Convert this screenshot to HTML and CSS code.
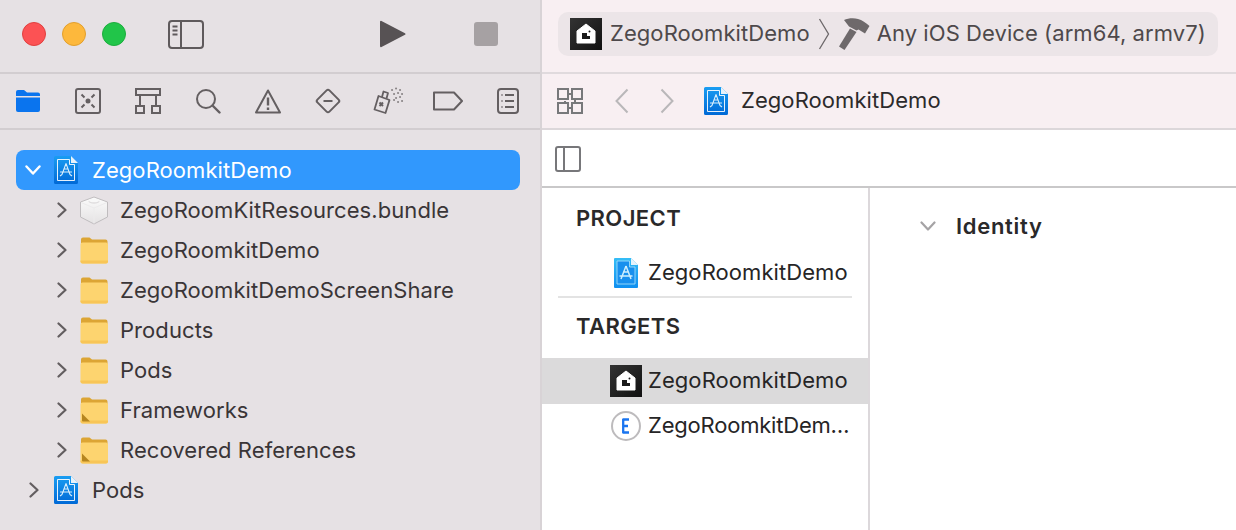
FILE: index.html
```html
<!DOCTYPE html>
<html lang="en">
<head>
<meta charset="utf-8">
<title>ZegoRoomkitDemo</title>
<link rel="stylesheet" href="styles.css">
</head>
<body>
<svg class="defs" width="0" height="0" aria-hidden="true">
  <defs>
    <linearGradient id="blue" x1="0" y1="0" x2="0" y2="1"><stop offset="0" stop-color="#1a9df2"/><stop offset="1" stop-color="#0069d6"/></linearGradient>
    <linearGradient id="lightblue" x1="0" y1="0" x2="0" y2="1"><stop offset="0" stop-color="#35bdf6"/><stop offset="1" stop-color="#0f8ff0"/></linearGradient>
    <linearGradient id="dark" x1="0" y1="0" x2="1" y2="1"><stop offset="0" stop-color="#333"/><stop offset="1" stop-color="#111"/></linearGradient>
    <linearGradient id="brick" x1="0" y1="0" x2="0" y2="1"><stop offset="0" stop-color="#fbfbfb"/><stop offset="1" stop-color="#e4e2e3"/></linearGradient>
    <symbol id="doc" viewBox="0 0 24 28">
      <path d="M1.500 0H17l7 7v19.500a1.500 1.500 0 0 1-1.500 1.500h-21A1.500 1.500 0 0 1 0 26.500V1.500A1.500 1.500 0 0 1 1.500 0z" fill="url(#blue)"/>
      <path d="M17 0l7 7h-7z" fill="#e8f2fa"/>
      <path d="M3.500 3.500H15.500V8.500H20.500V24.500H3.500z" fill="none" stroke="#fff" stroke-width=".9"/>
      <path d="M12 7.500L8 18.500M12 7.500L16 18.500M9.500 13h5M6 16h12M6 20l2-1.500M18 20l-2-1.500" fill="none" stroke="#d8eefc" stroke-width="1.100"/>
    </symbol>
    <symbol id="app" viewBox="0 0 32 32">
      <rect width="32" height="32" fill="url(#dark)"/>
      <path d="M16 6L25 13V25H7V13z" fill="#fff" stroke="#fff" stroke-linejoin="round"/>
      <path d="M12 15h5v3h3v3h-8z" fill="#1a1a1a"/>
      <circle cx="19.500" cy="13.500" r="1" fill="#1a1a1a"/>
    </symbol>
    <symbol id="folder" viewBox="0 0 28 28">
      <path d="M1 6.500V3.500A2 2 0 0 1 3 1.500h6.500l2.500 2H25.500A2 2 0 0 1 27.500 5.500V8H1z" fill="#dca534"/>
      <path d="M.5 8.500A2 2 0 0 1 2.500 6.500H26a2 2 0 0 1 2 2V25.500a2 2 0 0 1-2 2H2.500a2 2 0 0 1-2-2z" fill="#fdd46f"/>
      <path d="M.5 24.500H28v1a2 2 0 0 1-2 2H2.500a2 2 0 0 1-2-2z" fill="#f8c557"/>
    </symbol>
    <symbol id="folder-ref" viewBox="0 0 28 28">
      <use href="#folder" width="28" height="28"/>
      <path d="M2 17.500L10 25.500H3a1 1 0 0 1-1-1z" fill="#b5851f"/>
    </symbol>
    <symbol id="chev" viewBox="0 0 10 16">
      <path d="M1.500 1.500L8.500 8L1.500 14.500" fill="none" stroke="currentColor" stroke-width="2.200" stroke-linecap="round" stroke-linejoin="round"/>
    </symbol>
  </defs>
</svg>

<div class="window">
  <aside class="left">
    <header class="left-toolbar">
      <div class="lights">
        <span class="light red"></span><span class="light yellow"></span><span class="light green"></span>
      </div>
      <svg class="ico-sidebar" width="36" height="29" viewBox="0 0 36 29"><rect x="1" y="1" width="34" height="27" rx="3" fill="none" stroke="#5f5a5c" stroke-width="2"/><path d="M13 1v27" stroke="#5f5a5c" stroke-width="2"/><path d="M4.500 6.500h5M4.500 10.500h5M4.500 14.500h5" stroke="#5f5a5c" stroke-width="2"/></svg>
      <svg class="ico-play" width="26" height="28" viewBox="0 0 26 28"><path d="M1.500 1L25 13.200a1 1 0 0 1 0 1.600L1.500 27a1 1 0 0 1-1.500-1V2a1 1 0 0 1 1.500-1z" fill="#575254"/></svg>
      <span class="stop"></span>
    </header>
    <nav class="tabs">
      <span class="tab"><svg width="26" height="24" viewBox="0 0 26 24"><path d="M1 5V3a2 2 0 0 1 2-2h6l3 2.500h11a2 2 0 0 1 2 2V7H1z" fill="#0a74ee"/><path d="M1 8.500h24V21a2 2 0 0 1-2 2H3a2 2 0 0 1-2-2z" fill="#0a74ee"/></svg></span>
      <span class="tab"><svg width="26" height="26" viewBox="0 0 26 26" fill="none" stroke="#645f61" stroke-width="2"><rect x="1" y="1" width="24" height="24" rx="2"/><circle cx="13" cy="13" r="2.500" fill="#645f61" stroke="none"/><path d="M6.500 6.500l3 3M19.500 6.500l-3 3M6.500 19.500l3-3M19.500 19.500l-3-3"/></svg></span>
      <span class="tab"><svg width="26" height="26" viewBox="0 0 26 26" fill="none" stroke="#645f61" stroke-width="2"><rect x="1" y="1" width="24" height="6"/><path d="M5 7v11M21 7v11"/><rect x="1" y="18" width="8" height="7"/><rect x="17" y="18" width="8" height="7"/></svg></span>
      <span class="tab"><svg width="26" height="26" viewBox="0 0 26 26" fill="none" stroke="#645f61" stroke-width="2"><circle cx="11" cy="11" r="9"/><path d="M17.500 17.500l7 7" stroke-width="2.400" stroke-linecap="round"/></svg></span>
      <span class="tab"><svg width="26" height="25" viewBox="0 0 26 25" fill="none" stroke="#645f61" stroke-width="2"><path d="M13 1.500L25 23.500H1z" stroke-linejoin="round"/><path d="M13 8.500v8M13 18.500v2.500" stroke-width="2.400"/></svg></span>
      <span class="tab"><svg width="28" height="28" viewBox="0 0 28 28" fill="none" stroke="#645f61" stroke-width="2"><rect x="5.500" y="5.500" width="17" height="17" rx="2" transform="rotate(45 14 14)"/><path d="M9.500 14h9"/></svg></span>
      <span class="tab"><svg width="32" height="28" viewBox="0 0 32 28" fill="none" stroke="#645f61" stroke-width="1.800"><path d="M6.500 9L17.500 13 13.500 26 2.500 22.500z" stroke-linejoin="round"/><path d="M10 10l1.500-5.500 4.500 1.500-1.500 5.500" stroke-linejoin="round"/><path d="M7.500 15.500l3.500 3.500M11 15.500L7.500 19" stroke-width="2"/><path d="M20 3h.1M24 1.500h.1M28 3h.1M22 7h.1M26 6h.1M30 7h.1M24 11h.1M28 10h.1M26 15h.1M30 14h.1M22 13h.1" stroke="#8a8587" stroke-width="2" stroke-linecap="round"/></svg></span>
      <span class="tab"><svg width="30" height="20" viewBox="0 0 30 20" fill="none" stroke="#645f61" stroke-width="2"><path d="M1 1.500H21L29 10l-8 8.500H1z" stroke-linejoin="round"/></svg></span>
      <span class="tab"><svg width="22" height="26" viewBox="0 0 22 26" fill="none" stroke="#645f61" stroke-width="2"><rect x="1" y="1" width="20" height="24" rx="3"/><path d="M8 7h9M8 13h9M8 19h9"/><path d="M4.500 7h1M4.500 13h1M4.500 19h1"/></svg></span>
    </nav>
    <ul class="tree">
      <li class="row sel">
        <svg class="tw open" width="16" height="10" viewBox="0 0 16 10"><path d="M1.500 1.500L8 8.500L14.500 1.500" fill="none" stroke="#fff" stroke-width="2.400" stroke-linecap="round" stroke-linejoin="round"/></svg>
        <svg class="doc" width="24" height="28"><use href="#doc"/></svg>
        <span class="lbl">ZegoRoomkitDemo</span>
      </li>
      <li class="row child">
        <svg class="tw" width="10" height="16"><use href="#chev"/></svg>
        <svg class="ico" width="28" height="29" viewBox="0 0 28 29"><path d="M14 1L27.500 6V21L14 28 .5 21V6z" fill="url(#brick)" stroke="#bfbcbe" stroke-linejoin="round"/><path d="M1 6.500L14 12 27 6.500M14 12V27.500" fill="none" stroke="#ecebec"/><ellipse cx="14" cy="5.500" rx="5.500" ry="2.200" fill="#dfddde"/><ellipse cx="14" cy="4.500" rx="5" ry="1.800" fill="#f8f8f8"/></svg>
        <span class="lbl">ZegoRoomKitResources.bundle</span>
      </li>
      <li class="row child"><svg class="tw" width="10" height="16"><use href="#chev"/></svg><svg class="ico" width="28" height="28"><use href="#folder"/></svg><span class="lbl">ZegoRoomkitDemo</span></li>
      <li class="row child"><svg class="tw" width="10" height="16"><use href="#chev"/></svg><svg class="ico" width="28" height="28"><use href="#folder"/></svg><span class="lbl">ZegoRoomkitDemoScreenShare</span></li>
      <li class="row child"><svg class="tw" width="10" height="16"><use href="#chev"/></svg><svg class="ico" width="28" height="28"><use href="#folder"/></svg><span class="lbl">Products</span></li>
      <li class="row child"><svg class="tw" width="10" height="16"><use href="#chev"/></svg><svg class="ico" width="28" height="28"><use href="#folder"/></svg><span class="lbl">Pods</span></li>
      <li class="row child"><svg class="tw" width="10" height="16"><use href="#chev"/></svg><svg class="ico" width="28" height="28"><use href="#folder-ref"/></svg><span class="lbl">Frameworks</span></li>
      <li class="row child"><svg class="tw" width="10" height="16"><use href="#chev"/></svg><svg class="ico" width="28" height="28"><use href="#folder-ref"/></svg><span class="lbl">Recovered References</span></li>
      <li class="row top"><svg class="tw" width="10" height="16"><use href="#chev"/></svg><svg class="doc" width="24" height="28"><use href="#doc"/></svg><span class="lbl">Pods</span></li>
    </ul>
  </aside>

  <main class="right">
    <header class="right-toolbar">
      <div class="scheme">
        <svg width="32" height="32"><use href="#app"/></svg>
        <span class="scheme-name">ZegoRoomkitDemo</span>
        <svg class="scheme-sep" width="12" height="32" viewBox="0 0 12 32"><path d="M1.500 1L10.500 16L1.500 31" fill="none" stroke="#6c6769" stroke-width="1.300"/></svg>
        <svg class="hammer" width="31" height="32" viewBox="0 0 31 32"><path d="M5 2C9 0 15-.5 19 1C23 2 27 5 30.500 8L26 15.500L19.500 11.500L17.500 12.500L10 8.500Z" fill="#6e696b"/><path d="M11 10.500L17.500 14L5.500 32L0 28.500Z" fill="#6e696b"/></svg>
        <span class="scheme-dest">Any iOS Device (arm64, armv7)</span>
      </div>
    </header>
    <div class="jumpbar">
      <svg width="26" height="26" viewBox="0 0 26 26" fill="none" stroke="#77787a" stroke-width="2"><rect x="1" y="1" width="10" height="10"/><rect x="15" y="1" width="10" height="10"/><rect x="1" y="15" width="10" height="10"/><rect x="15" y="15" width="10" height="10"/><path d="M11 6h4M11 20h4M8 15v-2M18 11v4"/></svg>
      <svg class="back" width="14" height="26" viewBox="0 0 14 26"><path d="M12.500 1.500L1.500 13L12.500 24.500" fill="none" stroke="#b9b7b9" stroke-width="2"/></svg>
      <svg class="fwd" width="14" height="26" viewBox="0 0 14 26"><path d="M1.500 1.500L12.500 13L1.500 24.500" fill="none" stroke="#b9b7b9" stroke-width="2"/></svg>
      <svg class="jump-doc" width="24" height="28"><use href="#doc"/></svg>
      <span class="jump-name">ZegoRoomkitDemo</span>
    </div>
    <div class="editor-bar">
      <svg width="26" height="26" viewBox="0 0 26 26" fill="none" stroke="#77777a" stroke-width="2"><rect x="1" y="1" width="24" height="24" rx="2"/><path d="M9 1v24"/></svg>
    </div>
    <div class="editor">
      <section class="targets">
        <h2 class="group first">PROJECT</h2>
        <div class="titem project">
          <svg class="ti" width="24" height="30" viewBox="0 0 24 30"><path d="M1 0H17l7 7v22a1 1 0 0 1-1 1H1a1 1 0 0 1-1-1V1a1 1 0 0 1 1-1z" fill="url(#lightblue)"/><path d="M17 0l7 7h-7z" fill="#e6f3fb"/><path d="M3 3H15.500V9H21V26H3z" fill="#1890ee" stroke="#9fdcfa" stroke-width=".9"/><path d="M12 8L7 21M12 8l5 13M9 14h6M5.500 18h13" fill="none" stroke="#cdeefd" stroke-width="1.500"/></svg>
          <span class="tl">ZegoRoomkitDemo</span>
        </div>
        <hr class="sep">
        <h2 class="group">TARGETS</h2>
        <div class="titem sel-t">
          <svg width="32" height="32"><use href="#app"/></svg>
          <span class="tl">ZegoRoomkitDemo</span>
        </div>
        <div class="titem ext">
          <svg width="30" height="30" viewBox="0 0 30 30"><circle cx="15" cy="15" r="14" fill="#fff" stroke="#bdbbbd" stroke-width="2"/><path d="M11.500 8.500h6.500M11.500 15h5.500M11.500 21.500h6.500M12.200 8v14" fill="none" stroke="#1a75f0" stroke-width="2.300"/></svg>
          <span class="tl">ZegoRoomkitDem…</span>
        </div>
      </section>
      <section class="details">
        <svg width="16" height="10" viewBox="0 0 16 10"><path d="M1.500 1.500L8 8.500L14.500 1.500" fill="none" stroke="#a5a3a5" stroke-width="2.200" stroke-linecap="round" stroke-linejoin="round"/></svg>
        <h2 class="identity">Identity</h2>
      </section>
    </div>
  </main>
</div>
</body>
</html>
```

FILE: styles.css
```css
* { box-sizing: border-box; }
html, body { margin: 0; height: 100%; overflow: hidden; }
body { font-family: Inter, "Liberation Sans", sans-serif; font-size: 22px; letter-spacing: .07px; color: #3a3537; background: #fff; }
.defs { display: block; width: 0; height: 0; }
.window { display: flex; width: 1236px; height: 530px; }

.left { width: 542px; flex: none; background: #e6e1e4; border-right: 2px solid #d8d3d6; display: flex; flex-direction: column; }
.left-toolbar { height: 74px; flex: none; border-bottom: 2px solid #d2cdd0; display: flex; align-items: center; padding: 0 0 4px 22px; }
.lights { display: flex; gap: 16px; }
.light { width: 24px; height: 24px; border-radius: 50%; }
.red { background: #fc5254; border: 1px solid #e0403f; }
.yellow { background: #fdb83c; border: 1px solid #e29f2d; }
.green { background: #21c549; border: 1px solid #1cad3d; }
.ico-sidebar { margin-left: 42px; }
.ico-play { margin-left: 176px; }
.stop { width: 24px; height: 24px; margin-left: 68px; border-radius: 3px; background: #a6a1a3; }

.tabs { height: 56px; flex: none; border-bottom: 2px solid #d2cdd0; display: flex; align-items: center; margin-left: -2px; }
.tab { width: 60px; flex: none; display: flex; justify-content: center; align-items: center; }

.tree { list-style: none; margin: 0; padding: 20px 20px 0 16px; }
.row { height: 40px; display: flex; align-items: center; border-radius: 8px; }
.tw { color: #635e60; flex: none; }
.sel { background: #3198fd; color: #fff; padding-left: 9px; }
.sel .doc { margin-left: 13px; }
.sel .lbl { margin-left: 14px; }
.child { padding-left: 41px; }
.child .ico { margin-left: 13px; }
.child .lbl { margin-left: 12px; }
.top { padding-left: 13px; }
.top .doc { margin-left: 15px; }
.top .lbl { margin-left: 14px; }
.lbl { white-space: nowrap; }

.right { flex: 1; min-width: 0; display: flex; flex-direction: column; }
.right-toolbar { height: 74px; flex: none; background: #f8eff2; border-bottom: 2px solid #e0dadd; padding: 12px 18px 0 16px; }
.scheme { height: 44px; border-radius: 10px; background: #ece5e8; display: flex; align-items: center; padding-left: 12px; color: #4e494b; }
.scheme-name { margin: 0 0 2px 8px; }
.scheme-sep { margin-left: 8px; }
.hammer { margin-left: 9px; }
.scheme-dest { margin: 0 0 2px 7px; }

.jumpbar { height: 56px; flex: none; background: #f8eff2; border-bottom: 2px solid #dcd7da; display: flex; align-items: center; padding-left: 15px; color: #2c2a2b; }
.back { margin-left: 32px; }
.fwd { margin-left: 31px; }
.jump-doc { margin-left: 30px; }
.jump-name { margin: 0 0 2px 13px; }

.editor-bar { height: 58px; flex: none; border-bottom: 2px solid #c9c8c9; display: flex; align-items: center; padding: 2px 0 0 13px; }

.editor { flex: 1; display: flex; min-height: 0; }
.targets { width: 328px; flex: none; border-right: 2px solid #dcd8db; color: #262526; }
.group { margin: 0; height: 46px; padding-left: 34px; font-size: 22px; font-weight: 600; letter-spacing: .4px; line-height: 46px; color: #2a292a; }
.group.first { margin-top: 7px; }
.titem { display: flex; align-items: center; }
.tl { margin: 0 0 2px 6px; white-space: nowrap; }
.project { height: 49px; padding: 2px 0 0 72px; margin-top: 6px; }
.project .tl { margin-left: 10px; }
.sep { height: 2px; border: 0; background: #e3e3e3; margin: 0 16px 5px; }
.sel-t { height: 46px; margin-top: 9px; padding-left: 68px; background: #dbdadb; }
.ext { height: 44px; padding-left: 69px; }
.ext .tl { margin-left: 7px; letter-spacing: -.2px; }

.details { flex: 1; display: flex; align-items: center; align-self: flex-start; height: 76px; padding-left: 50px; }
.identity { margin: 0 0 0 20px; font-size: 22px; font-weight: 600; letter-spacing: .7px; color: #2a292a; }
```
